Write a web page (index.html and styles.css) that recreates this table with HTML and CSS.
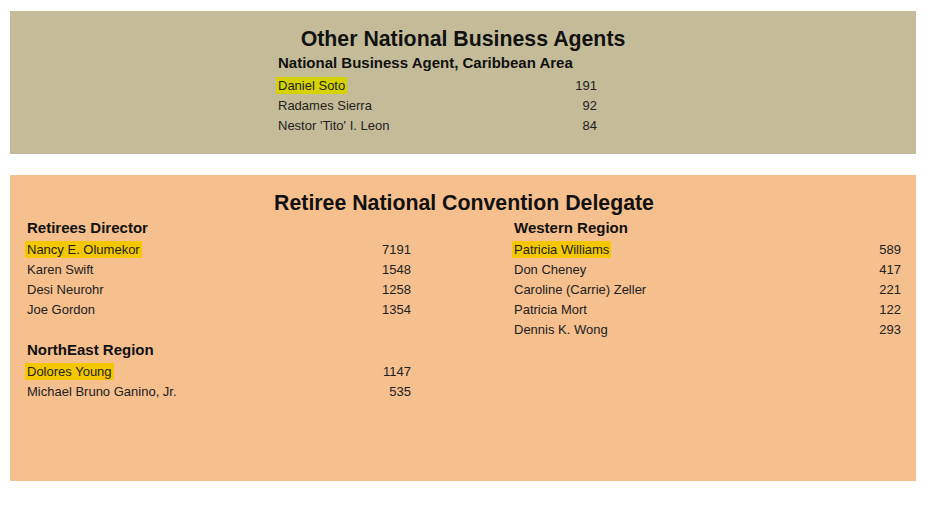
FILE: index.html
```html
<!DOCTYPE html>
<html>
<head>
<meta charset="utf-8">
<link rel="stylesheet" href="styles.css">
</head>
<body>
<section class="panel panel-agents">
  <h2 class="panel-title">Other National Business Agents</h2>
  <div class="agents-block">
    <h3 class="group-title">National Business Agent, Caribbean Area</h3>
    <div class="row"><span class="name"><span class="hl hl-green">Daniel Soto</span></span><span class="num">191</span></div>
    <div class="row"><span class="name">Radames Sierra</span><span class="num">92</span></div>
    <div class="row"><span class="name">Nestor 'Tito' I. Leon</span><span class="num">84</span></div>
  </div>
</section>

<section class="panel panel-retiree">
  <h2 class="panel-title">Retiree National Convention Delegate</h2>
  <div class="columns">
    <div class="col">
      <div class="group">
        <h3 class="group-title">Retirees Director</h3>
        <div class="row"><span class="name"><span class="hl hl-gold">Nancy E. Olumekor</span></span><span class="num">7191</span></div>
        <div class="row"><span class="name">Karen Swift</span><span class="num">1548</span></div>
        <div class="row"><span class="name">Desi Neurohr</span><span class="num">1258</span></div>
        <div class="row"><span class="name">Joe Gordon</span><span class="num">1354</span></div>
      </div>
      <div class="group">
        <h3 class="group-title">NorthEast Region</h3>
        <div class="row"><span class="name"><span class="hl hl-gold">Dolores Young</span></span><span class="num">1147</span></div>
        <div class="row"><span class="name">Michael Bruno Ganino, Jr.</span><span class="num">535</span></div>
      </div>
    </div>
    <div class="col">
      <div class="group">
        <h3 class="group-title">Western Region</h3>
        <div class="row"><span class="name"><span class="hl hl-gold">Patricia Williams</span></span><span class="num">589</span></div>
        <div class="row"><span class="name">Don Cheney</span><span class="num">417</span></div>
        <div class="row"><span class="name">Caroline (Carrie) Zeller</span><span class="num">221</span></div>
        <div class="row"><span class="name">Patricia Mort</span><span class="num">122</span></div>
        <div class="row"><span class="name">Dennis K. Wong</span><span class="num">293</span></div>
      </div>
    </div>
  </div>
</section>
</body>
</html>
```

FILE: styles.css
```css
html, body {
  margin: 0;
  padding: 0;
  background: #ffffff;
}
body {
  font-family: "Liberation Sans", Arial, sans-serif;
  color: #222222;
  padding-top: 11px;
}
.panel {
  box-sizing: border-box;
  width: 906px;
  margin-left: 10px;
}
.panel-agents {
  background: #c4bc98;
  height: 143px;
  padding-top: 16px;
}
.panel-retiree {
  background: #f5bf8e;
  height: 306px;
  margin-top: 21px;
  padding: 16px 15px 0 17px;
}
.panel-title {
  margin: 0;
  font-size: 21.3px;
  line-height: 24px;
  font-weight: bold;
  text-align: center;
  color: #111111;
}
.group-title {
  margin: 0;
  font-size: 15px;
  line-height: 20px;
  font-weight: bold;
  color: #111111;
}
.agents-block {
  width: 370px;
  margin: 2px auto 0;
  box-sizing: border-box;
  padding-right: 51px;
}
.agents-block .group-title {
  margin-bottom: 3px;
}
.row {
  display: flex;
  justify-content: space-between;
  font-size: 13px;
  line-height: 20px;
}
.hl {
  padding: 1px 2px;
  margin-left: -2px;
}
.hl-green {
  background: #d6d200;
}
.hl-gold {
  background: #f4c800;
}
.columns {
  display: grid;
  grid-template-columns: 384px 387px;
  column-gap: 103px;
  margin-top: 3px;
}
.group + .group {
  margin-top: 20px;
}
.group .group-title {
  margin-bottom: 2px;
}
```
